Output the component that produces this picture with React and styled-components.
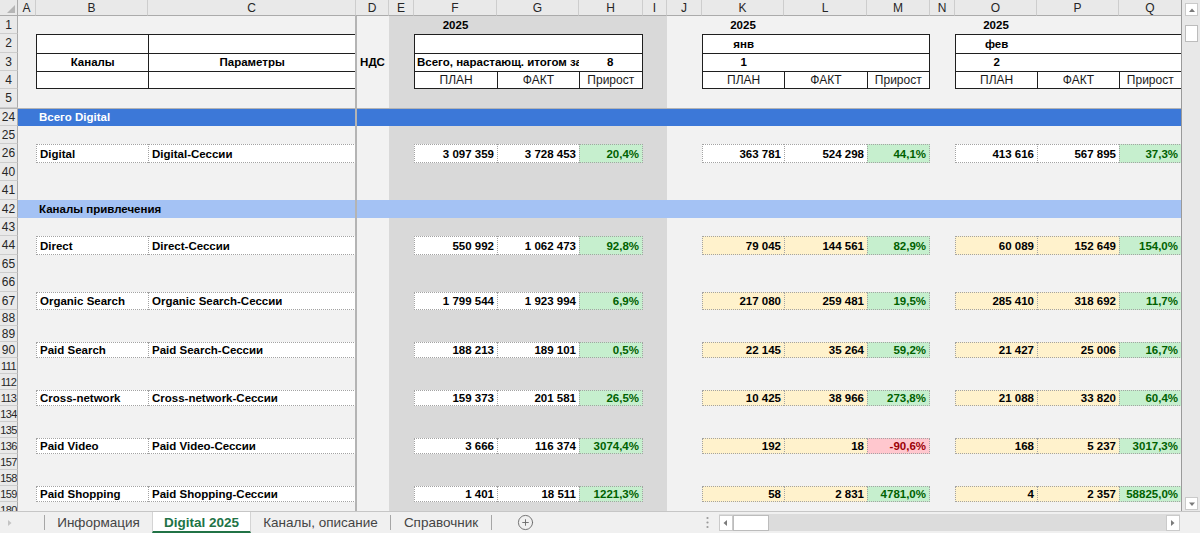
import React from "react";
import styled, { createGlobalStyle, css } from "styled-components";
import { CirclePlus } from "lucide-react";

const GlobalStyle = createGlobalStyle`
  html, body {
    margin: 0;
    padding: 0;
    background: #f2f2f2;
  }
  body {
    font-family: "Liberation Sans", Arial, sans-serif;
  }
  * {
    box-sizing: border-box;
  }
`;

const LETTERS = ["A", "B", "C", "D", "E", "F", "G", "H", "I", "J", "K", "L", "M", "N", "O", "P", "Q"];
const WIDTHS = [18, 112, 208, 33, 25, 83, 82, 64, 24, 35, 82, 83, 63, 25, 82, 82, 63];
const ROWS = ["1", "2", "3", "4", "5", "24", "25", "26", "40", "41", "42", "43", "44", "65", "66", "67",
  "88", "89", "90", "111", "112", "113", "134", "135", "136", "157", "158", "159", "180"];
const HEIGHTS = [18, 19, 18, 18, 19, 18, 18, 19, 18, 19, 18, 18, 19, 18, 19, 18,
  16, 16, 16, 16, 16, 16, 16, 16, 16, 16, 16, 16, 16];

const col = (l) => LETTERS.indexOf(l) + 2;
const row = (n) => ROWS.indexOf(n) + 2;

const DATA = [
  { r: "26", b: "Digital", c: "Digital-Сессии", plain: true,
    vals: [["3 097 359", "3 728 453", "20,4%"], ["363 781", "524 298", "44,1%"], ["413 616", "567 895", "37,3%"]] },
  { r: "44", b: "Direct", c: "Direct-Сессии",
    vals: [["550 992", "1 062 473", "92,8%"], ["79 045", "144 561", "82,9%"], ["60 089", "152 649", "154,0%"]] },
  { r: "67", b: "Organic Search", c: "Organic Search-Сессии",
    vals: [["1 799 544", "1 923 994", "6,9%"], ["217 080", "259 481", "19,5%"], ["285 410", "318 692", "11,7%"]] },
  { r: "90", b: "Paid Search", c: "Paid Search-Сессии",
    vals: [["188 213", "189 101", "0,5%"], ["22 145", "35 264", "59,2%"], ["21 427", "25 006", "16,7%"]] },
  { r: "113", b: "Cross-network", c: "Cross-network-Сессии",
    vals: [["159 373", "201 581", "26,5%"], ["10 425", "38 966", "273,8%"], ["21 088", "33 820", "60,4%"]] },
  { r: "136", b: "Paid Video", c: "Paid Video-Сессии",
    vals: [["3 666", "116 374", "3074,4%"], ["192", "18", "-90,6%"], ["168", "5 237", "3017,3%"]] },
  { r: "159", b: "Paid Shopping", c: "Paid Shopping-Сессии",
    vals: [["1 401", "18 511", "1221,3%"], ["58", "2 831", "4781,0%"], ["4", "2 357", "58825,0%"]] },
];

const GROUP_COLS = ["F", "K", "O"];
const MONTHS = [null, { name: "янв", num: "1" }, { name: "фев", num: "2" }];

const place = css`
  grid-row: ${(p) => p.$r} / span ${(p) => p.$rs || 1};
  grid-column: ${(p) => p.$c} / span ${(p) => p.$cs || 1};
`;

const Window = styled.div`
  width: 1200px;
  height: 533px;
  display: flex;
  flex-direction: column;
  overflow: hidden;
  background: #f2f2f2;
`;

const Main = styled.div`
  display: flex;
  height: 511px;
`;

const Sheet = styled.div`
  display: grid;
  width: 1182px;
  height: 511px;
  overflow: hidden;
  grid-template-columns: 18px ${WIDTHS.map((w) => `${w}px`).join(" ")};
  grid-template-rows: 16px ${HEIGHTS.map((h) => `${h}px`).join(" ")};
  background: #f2f2f2;
  font-family: "Liberation Sans", Arial, sans-serif;
  font-size: 11.5px;
  font-weight: bold;
  color: #000;
  border-right: 1px solid #9a9a9a;
`;

const Corner = styled.div`
  ${place}
  background: #e9e9e9;
  border-right: 1px solid #ababab;
  border-bottom: 1px solid #ababab;
  display: flex;
  align-items: flex-end;
  justify-content: flex-end;
`;

const ColHead = styled.div`
  ${place}
  background: #e9e9e9;
  border-right: 1px solid #cdcdcd;
  border-bottom: 1px solid #ababab;
  display: flex;
  align-items: center;
  justify-content: center;
  font-size: 12px;
  font-weight: normal;
  color: #262626;
`;

const RowHead = styled.div`
  ${place}
  background: #e9e9e9;
  border-bottom: 1px solid #cdcdcd;
  border-right: 1px solid #ababab;
  display: flex;
  align-items: center;
  justify-content: center;
  overflow: hidden;
  font-size: ${(p) => (p.$tight ? "11px" : "12px")};
  letter-spacing: ${(p) => (p.$tight ? "-0.6px" : "0")};
  font-weight: normal;
  color: #262626;
`;

const Band = styled.div`
  ${place}
  background: #d9d9d9;
`;

const SectionBar = styled.div`
  ${place}
  background: ${(p) => p.$bg};
  color: ${(p) => p.$fg};
  display: flex;
  align-items: center;
  padding-left: 21px;
  white-space: nowrap;
`;

const Label = styled.div`
  ${place}
  display: flex;
  align-items: center;
  justify-content: ${(p) => (p.$left ? "flex-start" : "center")};
  white-space: nowrap;
`;

const Box = styled.div`
  ${place}
  display: grid;
  grid-template-columns: ${(p) => p.$cols};
  grid-template-rows: 19fr 18fr 18fr;
  border: 1px solid #1f1f1f;
  background: #fff;
`;

const BoxCell = styled.div`
  grid-column: span ${(p) => p.$span || 1};
  border-top: ${(p) => (p.$top ? "1px solid #1f1f1f" : "none")};
  border-left: ${(p) => (p.$left ? "1px solid #1f1f1f" : "none")};
  display: flex;
  align-items: center;
  justify-content: ${(p) => (p.$start ? "flex-start" : "center")};
  padding: 0 2px;
  overflow: hidden;
  white-space: nowrap;
  font-weight: ${(p) => (p.$thin ? "normal" : "bold")};
  font-size: ${(p) => (p.$thin ? "12px" : "11.5px")};
  color: ${(p) => (p.$thin ? "#1a1a1a" : "#000")};
`;

const Cell = styled.div`
  ${place}
  background: ${(p) => p.$bg || "#fff"};
  color: ${(p) => p.$fg || "#000"};
  border-top: 1px dotted #a3a3a3;
  border-bottom: 1px dotted #a3a3a3;
  border-left: 1px dotted #a3a3a3;
  border-right: ${(p) => (p.$last ? "1px dotted #a3a3a3" : "none")};
  display: flex;
  align-items: center;
  justify-content: ${(p) => (p.$num ? "flex-end" : "flex-start")};
  padding: 0 3px;
  white-space: nowrap;
  overflow: hidden;
`;

const FreezeV = styled.div`
  ${place}
  border-left: 2px solid #b4b4b4;
  margin-left: -1px;
`;

const FreezeH = styled.div`
  ${place}
  border-top: 1px solid #b4b4b4;
`;

const VScroll = styled.div`
  width: 18px;
  height: 511px;
  background: #e8e8e8;
  display: flex;
  flex-direction: column;
  align-items: center;
  padding: 3px 0 1px 1px;
`;

const ScrollBtn = styled.div`
  width: ${(p) => (p.$wide ? "14px" : "13px")};
  height: ${(p) => (p.$tall ? "16px" : "13px")};
  background: #fff;
  border: 1px solid #cacaca;
  display: flex;
  align-items: center;
  justify-content: center;
  flex-shrink: 0;
`;

const Thumb = styled.div`
  width: ${(p) => (p.$w ? `${p.$w}px` : "13px")};
  height: ${(p) => (p.$h ? `${p.$h}px` : "17px")};
  margin-top: ${(p) => p.$mt || 0}px;
  background: #fff;
  border: 1px solid #bcbcbc;
  flex-shrink: 0;
`;

const Grow = styled.div`
  flex: 1;
`;

const TabBar = styled.div`
  height: 22px;
  display: flex;
  align-items: stretch;
  background: #f0f0f0;
  border-top: 1px solid #c6c6c6;
  font-family: "Liberation Sans", Arial, sans-serif;
`;

const NavArea = styled.div`
  width: 44px;
  display: flex;
  align-items: center;
  padding-left: 6px;
`;

const Sep = styled.div`
  width: 1px;
  height: 15px;
  align-self: center;
  background: #a6a6a6;
`;

const Tab = styled.div`
  width: ${(p) => p.$w}px;
  display: flex;
  align-items: center;
  justify-content: center;
  font-size: 13.5px;
  white-space: nowrap;
  color: ${(p) => (p.$active ? "#217346" : "#444")};
  font-weight: ${(p) => (p.$active ? "bold" : "normal")};
  background: ${(p) => (p.$active ? "#fff" : "transparent")};
  border-bottom: ${(p) => (p.$active ? "2px solid #217346" : "none")};
  border-left: ${(p) => (p.$active ? "1px solid #d4d4d4" : "none")};
  border-right: ${(p) => (p.$active ? "1px solid #d4d4d4" : "none")};
  padding-top: ${(p) => (p.$active ? "2px" : "0")};
`;

const AddTab = styled.div`
  width: 66px;
  display: flex;
  align-items: center;
  justify-content: center;
  color: #6a6a6a;
`;

const Dots = styled.div`
  width: 14px;
  margin-right: 5px;
  display: flex;
  align-items: center;
  justify-content: center;
`;

const HScroll = styled.div`
  width: 461px;
  height: 17px;
  align-self: center;
  background: #dcdcdc;
  display: flex;
  align-items: center;
`;

const Tail = styled.div`
  width: 20px;
`;

const Tri = ({ dir, color = "#7b7b7b" }) => {
  const pts = {
    up: "1,5 4,1.5 7,5",
    down: "1,1.5 4,5 7,1.5",
    left: "5,1 1.5,4 5,7",
    right: "2,1 5.5,4 2,7",
  }[dir];
  const vertical = dir === "up" || dir === "down";
  return (
    <svg width="8" height={vertical ? 6 : 8} viewBox={vertical ? "0 0 8 6" : "0 0 8 8"}>
      <polygon points={pts} fill={color} />
    </svg>
  );
};

const HeaderBox = ({ startCol, month, cols }) => {
  if (!month) {
    return (
      <Box $r={row("2")} $rs={3} $c={col(startCol)} $cs={3} $cols={cols}>
        <BoxCell $span={3} />
        <BoxCell $span={2} $top $start>Всего, нарастающ. итогом за</BoxCell>
        <BoxCell $top>8</BoxCell>
        <BoxCell $top $thin>ПЛАН</BoxCell>
        <BoxCell $top $left $thin>ФАКТ</BoxCell>
        <BoxCell $top $left $thin>Прирост</BoxCell>
      </Box>
    );
  }
  return (
    <Box $r={row("2")} $rs={3} $c={col(startCol)} $cs={3} $cols={cols}>
      <BoxCell>{month.name}</BoxCell>
      <BoxCell $span={2} />
      <BoxCell $top>{month.num}</BoxCell>
      <BoxCell $top $span={2} />
      <BoxCell $top $thin>ПЛАН</BoxCell>
      <BoxCell $top $left $thin>ФАКТ</BoxCell>
      <BoxCell $top $left $thin>Прирост</BoxCell>
    </Box>
  );
};

const DataRow = ({ d }) => {
  const r = row(d.r);
  return (
    <>
      <Cell $r={r} $c={col("B")}>{d.b}</Cell>
      <Cell $r={r} $c={col("C")} $last>{d.c}</Cell>
      {d.vals.map((v, gi) => {
        const start = col(GROUP_COLS[gi]);
        const tint = gi > 0 && !d.plain ? "#fff2cc" : "#fff";
        const neg = v[2].startsWith("-");
        return (
          <React.Fragment key={gi}>
            <Cell $r={r} $c={start} $bg={tint} $num>{v[0]}</Cell>
            <Cell $r={r} $c={start + 1} $bg={tint} $num>{v[1]}</Cell>
            <Cell
              $r={r}
              $c={start + 2}
              $bg={neg ? "#ffc7ce" : "#c6efce"}
              $fg={neg ? "#9c0006" : "#006100"}
              $num
              $last
            >
              {v[2]}
            </Cell>
          </React.Fragment>
        );
      })}
    </>
  );
};

const boxCols = (start) => {
  const i = LETTERS.indexOf(start);
  return WIDTHS.slice(i, i + 3).map((w) => `${w}fr`).join(" ");
};

export default function App() {
  const lastRow = ROWS.length;
  return (
    <>
      <GlobalStyle />
      <Window>
        <Main>
          <Sheet>
            <Corner $r={1} $c={1}>
              <svg width="14" height="12" viewBox="0 0 14 12">
                <polygon points="12,2 12,10 4,10" fill="#b5b5b5" />
              </svg>
            </Corner>
            {LETTERS.map((l, i) => (
              <ColHead key={l} $r={1} $c={i + 2}>{l}</ColHead>
            ))}
            {ROWS.map((n, i) => (
              <RowHead key={n} $r={i + 2} $c={1} $tight={n.length > 2}>{n}</RowHead>
            ))}

            <Band $r={2} $rs={lastRow} $c={col("E")} $cs={5} />

            <SectionBar $r={row("24")} $c={col("A")} $cs={17} $bg="#3c78d8" $fg="#fff">
              Всего Digital
            </SectionBar>
            <SectionBar $r={row("42")} $c={col("A")} $cs={17} $bg="#a4c2f4" $fg="#000">
              Каналы привлечения
            </SectionBar>

            <Box $r={row("2")} $rs={3} $c={col("B")} $cs={2} $cols="112fr 208fr">
              <BoxCell />
              <BoxCell $left />
              <BoxCell $top>Каналы</BoxCell>
              <BoxCell $top $left>Параметры</BoxCell>
              <BoxCell $top />
              <BoxCell $top $left />
            </Box>
            <Label $r={row("3")} $c={col("D")}>НДС</Label>

            {GROUP_COLS.map((g, gi) => (
              <React.Fragment key={g}>
                <Label $r={row("1")} $c={col(g)}>2025</Label>
                <HeaderBox startCol={g} month={MONTHS[gi]} cols={boxCols(g)} />
              </React.Fragment>
            ))}

            {DATA.map((d) => (
              <DataRow key={d.r} d={d} />
            ))}

            <FreezeH $r={row("24")} $c={1} $cs={18} />
            <FreezeV $r={2} $rs={lastRow} $c={col("D")} />
          </Sheet>
          <VScroll>
            <ScrollBtn>
              <Tri dir="up" />
            </ScrollBtn>
            <Thumb $mt={9} />
            <Grow />
            <ScrollBtn>
              <Tri dir="down" />
            </ScrollBtn>
          </VScroll>
        </Main>
        <TabBar>
          <NavArea>
            <Tri dir="right" color="#c4c4c4" />
          </NavArea>
          <Sep />
          <Tab $w={107}>Информация</Tab>
          <Tab $w={99} $active>Digital 2025</Tab>
          <Tab $w={139}>Каналы, описание</Tab>
          <Sep />
          <Tab $w={100}>Справочник</Tab>
          <Sep />
          <AddTab>
            <CirclePlus size={17} strokeWidth={1.3} />
          </AddTab>
          <Grow />
          <Dots>
            <svg width="3" height="13" viewBox="0 0 3 13">
              <circle cx="1.5" cy="2" r="1.1" fill="#9a9a9a" />
              <circle cx="1.5" cy="6.5" r="1.1" fill="#9a9a9a" />
              <circle cx="1.5" cy="11" r="1.1" fill="#9a9a9a" />
            </svg>
          </Dots>
          <HScroll>
            <ScrollBtn $wide $tall>
              <Tri dir="left" />
            </ScrollBtn>
            <Thumb $w={36} $h={16} />
            <Grow />
            <ScrollBtn $wide $tall>
              <Tri dir="right" />
            </ScrollBtn>
          </HScroll>
          <Tail />
        </TabBar>
      </Window>
    </>
  );
}
